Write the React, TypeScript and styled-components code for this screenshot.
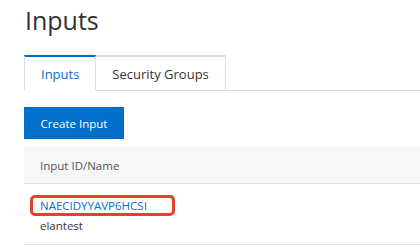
import styled, { createGlobalStyle } from 'styled-components';

const Global = createGlobalStyle`
  html, body {
    margin: 0;
    padding: 0;
    background: #fff;
  }
  body {
    font-family: 'Open Sans', 'Noto Sans', sans-serif;
    color: #333;
  }
`;

const Page = styled.div`
  padding: 0 0 0 24px;
  overflow: hidden;
  height: 246px;
`;

const Title = styled.h1`
  margin: 0;
  padding: 3px 0 0 1px;
  font-size: 25px;
  font-weight: 400;
  line-height: 34px;
  color: #333;
`;

const TabBar = styled.div`
  display: flex;
  margin-top: 18px;
  border-bottom: 1px solid #ddd;
`;

const Tab = styled.div<{ $active?: boolean }>`
  box-sizing: border-box;
  height: 36px;
  padding: 0 16px;
  display: flex;
  align-items: center;
  font-size: 13px;
  margin-bottom: -1px;
  border: 1px solid #ddd;
  border-left-width: ${({ $active }) => ($active ? '1px' : '0')};
  border-top: 2px solid ${({ $active }) => ($active ? '#0070cc' : '#ddd')};
  border-bottom-color: ${({ $active }) => ($active ? '#fff' : '#ddd')};
  color: ${({ $active }) => ($active ? '#0070cc' : '#333')};
  background: #fff;
`;

const Toolbar = styled.div`
  padding-top: 16px;
`;

const Button = styled.button`
  width: 100px;
  height: 32px;
  border: 0;
  background: #0070cc;
  color: #fff;
  font-family: inherit;
  font-size: 11.5px;
  padding: 0;
  cursor: pointer;
`;

const Table = styled.div`
  margin-top: 8px;
  width: 420px;
`;

const HeadRow = styled.div`
  height: 36px;
  background: #f7f7f7;
  border-bottom: 1px solid #e5e5e5;
  display: flex;
  align-items: center;
  padding-left: 16px;
  font-size: 11.5px;
  color: #555;
`;

const Row = styled.div`
  box-sizing: border-box;
  height: 61px;
  border-bottom: 1px solid #e5e5e5;
  display: flex;
  flex-direction: column;
  padding: 12px 0 0 16px;
  font-size: 11.5px;
  line-height: 20px;
`;

const IdLink = styled.a`
  position: relative;
  color: #0070cc;
  text-decoration: none;
  align-self: flex-start;

  &::after {
    content: '';
    position: absolute;
    left: -10px;
    right: -28px;
    top: -1px;
    bottom: 0;
    border: 3px solid #e5402a;
    border-radius: 5px;
  }
`;

const Name = styled.span`
  color: #333;
`;

export default function App() {
  return (
    <>
      <Global />
      <Page>
        <Title>Inputs</Title>
        <TabBar>
          <Tab $active>Inputs</Tab>
          <Tab>Security Groups</Tab>
        </TabBar>
        <Toolbar>
          <Button>Create Input</Button>
        </Toolbar>
        <Table>
          <HeadRow>Input ID/Name</HeadRow>
          <Row>
            <IdLink href="#">NAECIDYYAVP6HCSI</IdLink>
            <Name>elantest</Name>
          </Row>
        </Table>
      </Page>
    </>
  );
}
